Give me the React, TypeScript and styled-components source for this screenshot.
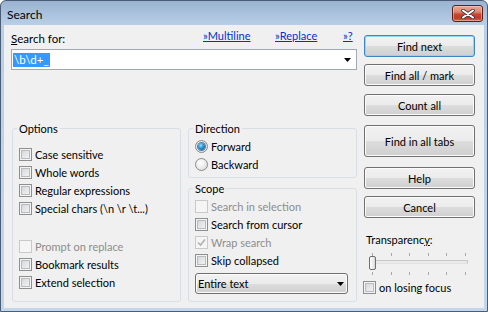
import React from "react";
import styled, { createGlobalStyle } from "styled-components";

const GlobalStyle = createGlobalStyle`
  html, body { margin: 0; padding: 0; background: #ffffff; }
  body { font-family: Lato, "Liberation Sans", sans-serif; font-size: 11px; color: #000; }
  * { box-sizing: border-box; }
`;

const Window = styled.div`
  width: 488px;
  height: 312px;
  display: flex;
  flex-direction: column;
  border: 1px solid #4a5d75;
  border-radius: 6px 6px 0 0;
  background: linear-gradient(to bottom, #9ab3d0 0px, #b8cfe7 24px, #c2d7ec 100%);
  padding: 0 3px 3px 3px;
  overflow: hidden;
`;

const TitleBar = styled.div`
  height: 24px;
  flex: none;
  display: flex;
  align-items: flex-start;
  justify-content: space-between;
  padding-left: 3px;
`;

const TitleText = styled.div`
  font-size: 12px;
  line-height: 15px;
  margin-top: 6px;
  color: #000;
`;

const CloseButton = styled.div`
  width: 31px;
  height: 17px;
  margin-top: 4px;
  margin-right: 1px;
  border: 1px solid #5c2118;
  border-radius: 3px;
  background: linear-gradient(to bottom, #eba796 0%, #dc8671 40%, #c8472f 55%, #c33b25 80%, #d96a4b 100%);
  box-shadow: inset 0 0 0 1px rgba(255, 220, 210, 0.45);
  display: flex;
  align-items: center;
  justify-content: center;
`;

const Client = styled.div`
  flex: 1;
  background: #f0f0f0;
  display: flex;
  gap: 7px;
  padding: 3px 9px 6px 7px;
`;

const LeftColumn = styled.div`
  width: 346px;
  display: flex;
  flex-direction: column;
`;

const Header = styled.div`
  display: flex;
  align-items: flex-start;
  height: 18px;
`;

const Label = styled.div`
  flex: 1;
  margin-top: 3px;
  line-height: 15px;
  font-size: 11.5px;
`;

const LinkCell = styled.div<{ $w: number }>`
  width: ${(p) => p.$w}px;
  line-height: 15px;
`;

const Link = styled.a`
  color: #0033cc;
  text-decoration: underline;
  cursor: pointer;
`;

const Combo = styled.div`
  margin-top: 3px;
  height: 21px;
  border: 1px solid #a3a9b1;
  background: #fff;
  display: flex;
  align-items: center;
  padding: 0 5px 0 1px;
`;

const ComboText = styled.div`
  flex: 1;
  line-height: 14px;
  display: flex;
  font-size: 11.5px;
`;

const Selected = styled.span`
  background: #3399ff;
  color: #fff;
  padding: 0 1px;
`;

const Groups = styled.div`
  margin-top: auto;
  height: 181px;
  display: flex;
  gap: 7px;
  padding-left: 1px;
`;

const Group = styled.fieldset<{ $pt: number; $pb?: number }>`
  margin: 0;
  min-width: 0;
  width: 169px;
  border: 1px solid #d5dfe5;
  border-radius: 3px;
  padding: ${(p) => p.$pt}px 6px ${(p) => p.$pb ?? 0}px 6px;
  display: flex;
  flex-direction: column;
`;

const Legend = styled.legend`
  padding: 0 2px;
  margin-left: -2px;
  line-height: 15px;
`;

const StackColumn = styled.div`
  display: flex;
  flex-direction: column;
  gap: 3px;
`;

const Row = styled.div<{ $disabled?: boolean }>`
  height: 18px;
  display: flex;
  align-items: center;
  gap: 3px;
  line-height: 15px;
  white-space: nowrap;
  color: ${(p) => (p.$disabled ? "#8d8d8d" : "#000")};
`;

const Spacer = styled.div<{ $h: number }>`
  height: ${(p) => p.$h}px;
  flex: none;
`;

const Box = styled.span<{ $disabled?: boolean }>`
  width: 13px;
  height: 13px;
  flex: none;
  border: 1px solid ${(p) => (p.$disabled ? "#c9c9c9" : "#8e8f8f")};
  background: ${(p) =>
    p.$disabled ? "#f5f5f5" : "linear-gradient(135deg, #cbcfd4 0%, #e4e6e8 50%, #f7f7f7 100%)"};
  box-shadow: ${(p) =>
    p.$disabled ? "none" : "inset 0 0 0 1px #f4f4f4, inset 0 0 0 2px #b8bcc1"};
  display: flex;
  align-items: center;
  justify-content: center;
`;

const Radio = styled.span<{ $checked?: boolean }>`
  width: 13px;
  height: 13px;
  flex: none;
  border-radius: 50%;
  border: 1px solid #8a8a8a;
  background: radial-gradient(circle at 40% 35%, #ffffff 0%, #e8e8e8 60%, #cfcfcf 100%);
  display: flex;
  align-items: center;
  justify-content: center;
  &::after {
    content: "";
    display: ${(p) => (p.$checked ? "block" : "none")};
    width: 7px;
    height: 7px;
    border-radius: 50%;
    background: radial-gradient(circle at 40% 35%, #9fe0ff 0%, #2a8fd0 45%, #0b4d86 100%);
    box-shadow: 0 0 0 1px #4b7fae;
  }
`;

const DropDown = styled.div`
  margin-top: 4px;
  width: 153px;
  height: 21px;
  border: 1px solid #707070;
  border-radius: 3px;
  background: linear-gradient(to bottom, #f2f2f2 0%, #ebebeb 50%, #dddddd 50%, #cfcfcf 100%);
  box-shadow: inset 0 0 0 1px #fbfbfb;
  display: flex;
  align-items: center;
  justify-content: space-between;
  padding: 0 3px 0 2px;
  line-height: 15px;
`;

const RightColumn = styled.div`
  width: 111px;
  display: flex;
  flex-direction: column;
`;

const Button = styled.div<{ $mt: number; $h?: number; $default?: boolean }>`
  margin-top: ${(p) => p.$mt}px;
  height: ${(p) => p.$h ?? 22}px;
  flex: none;
  border: 1px solid ${(p) => (p.$default ? "#3c86c4" : "#707070")};
  border-radius: 3px;
  background: linear-gradient(to bottom, #f2f2f2 0%, #ebebeb 50%, #dddddd 50%, #cfcfcf 100%);
  box-shadow: inset 0 0 0 1px ${(p) => (p.$default ? "#8fd6f8" : "#fbfbfb")};
  display: flex;
  align-items: center;
  justify-content: center;
  line-height: 15px;
`;

const SideLabel = styled.div`
  margin-top: 14px;
  margin-left: 2px;
  line-height: 15px;
`;

const Slider = styled.div`
  position: relative;
  margin-top: 4px;
  margin-left: 2px;
  width: 106px;
  height: 26px;
  flex: none;
`;

const Track = styled.div`
  position: absolute;
  left: 4px;
  top: 9px;
  width: 98px;
  height: 4px;
  border: 1px solid #c8c8c8;
  border-bottom-color: #e2e2e2;
  background: #e9eaea;
`;

const Thumb = styled.div`
  position: absolute;
  left: 3px;
  top: 5px;
  width: 7px;
  height: 14px;
  border: 1px solid #6f6f6f;
  border-radius: 2px;
  background: linear-gradient(to right, #fdfdfd 0%, #ececec 60%, #d9d9d9 100%);
`;

const Ticks = styled.svg`
  position: absolute;
  left: 0;
  top: 0;
`;

const FocusRow = styled(Row)`
  margin-top: 1px;
  margin-left: -1px;
`;

const Check = () => (
  <svg width="9" height="9" viewBox="0 0 9 9">
    <path d="M1 4.5 L3.5 7 L8 1.5" fill="none" stroke="#b0b0b0" strokeWidth="1.6" />
  </svg>
);

const DownArrow = () => (
  <svg width="7" height="4" viewBox="0 0 7 4">
    <path d="M0 0 H7 L3.5 4 Z" fill="#000" />
  </svg>
);

type CBProps = { label: string; disabled?: boolean; checked?: boolean };
const CheckRow = ({ label, disabled, checked }: CBProps) => (
  <Row $disabled={disabled}>
    <Box $disabled={disabled}>{checked ? <Check /> : null}</Box>
    <span>{label}</span>
  </Row>
);

const tickXs = [6, 25, 43, 62, 80, 99];

export default function App() {
  return (
    <>
      <GlobalStyle />
      <Window>
        <TitleBar>
          <TitleText>Search</TitleText>
          <CloseButton>
            <svg width="14" height="10" viewBox="0 0 14 10">
              <path d="M2 1.5 L12 8.5 M12 1.5 L2 8.5" stroke="#3a3a3a" strokeWidth="3.6" strokeLinecap="round" />
              <path d="M2 1.5 L12 8.5 M12 1.5 L2 8.5" stroke="#ffffff" strokeWidth="2" strokeLinecap="round" />
            </svg>
          </CloseButton>
        </TitleBar>
        <Client>
          <LeftColumn>
            <Header>
              <Label>
                <u>S</u>earch for:
              </Label>
              <LinkCell $w={72}>
                <Link>»Multiline</Link>
              </LinkCell>
              <LinkCell $w={68}>
                <Link>»Replace</Link>
              </LinkCell>
              <LinkCell $w={14}>
                <Link>»?</Link>
              </LinkCell>
            </Header>
            <Combo>
              <ComboText>
                <Selected>{"\\b\\d+_"}</Selected>
              </ComboText>
              <DownArrow />
            </Combo>
            <Groups>
              <Group $pt={9}>
                <Legend>Options</Legend>
                <CheckRow label="Case sensitive" />
                <CheckRow label="Whole words" />
                <CheckRow label="Regular expressions" />
                <CheckRow label={"Special chars (\\n \\r \\t...)"} />
                <Spacer $h={20} />
                <CheckRow label="Prompt on replace" disabled />
                <CheckRow label="Bookmark results" />
                <CheckRow label="Extend selection" />
              </Group>
              <StackColumn>
                <Group $pt={1} style={{ height: 57 }}>
                  <Legend>Direction</Legend>
                  <Row>
                    <Radio $checked />
                    <span>Forward</span>
                  </Row>
                  <Row>
                    <Radio />
                    <span>Backward</span>
                  </Row>
                </Group>
                <Group $pt={1} style={{ height: 121 }}>
                  <Legend>Scope</Legend>
                  <CheckRow label="Search in selection" disabled />
                  <CheckRow label="Search from cursor" />
                  <CheckRow label="Wrap search" disabled checked />
                  <CheckRow label="Skip collapsed" />
                  <DropDown>
                    <span>Entire text</span>
                    <DownArrow />
                  </DropDown>
                </Group>
              </StackColumn>
            </Groups>
          </LeftColumn>
          <RightColumn>
            <Button $mt={7} $default>Find next</Button>
            <Button $mt={7}>Find all / mark</Button>
            <Button $mt={8}>Count all</Button>
            <Button $mt={9} $h={32}>Find in all tabs</Button>
            <Button $mt={10}>Help</Button>
            <Button $mt={7}>Cancel</Button>
            <SideLabel>
              Transparenc<u>y</u>:
            </SideLabel>
            <Slider>
              <Ticks width="106" height="26" viewBox="0 0 106 26">
                {tickXs.map((x) => (
                  <g key={x}>
                    <line x1={x + 0.5} y1={2} x2={x + 0.5} y2={5} stroke="#a8a8a8" strokeWidth="1" />
                    <line x1={x + 0.5} y1={21} x2={x + 0.5} y2={24} stroke="#a8a8a8" strokeWidth="1" />
                  </g>
                ))}
              </Ticks>
              <Track />
              <Thumb />
            </Slider>
            <FocusRow>
              <Box />
              <span>on losing focus</span>
            </FocusRow>
          </RightColumn>
        </Client>
      </Window>
    </>
  );
}
